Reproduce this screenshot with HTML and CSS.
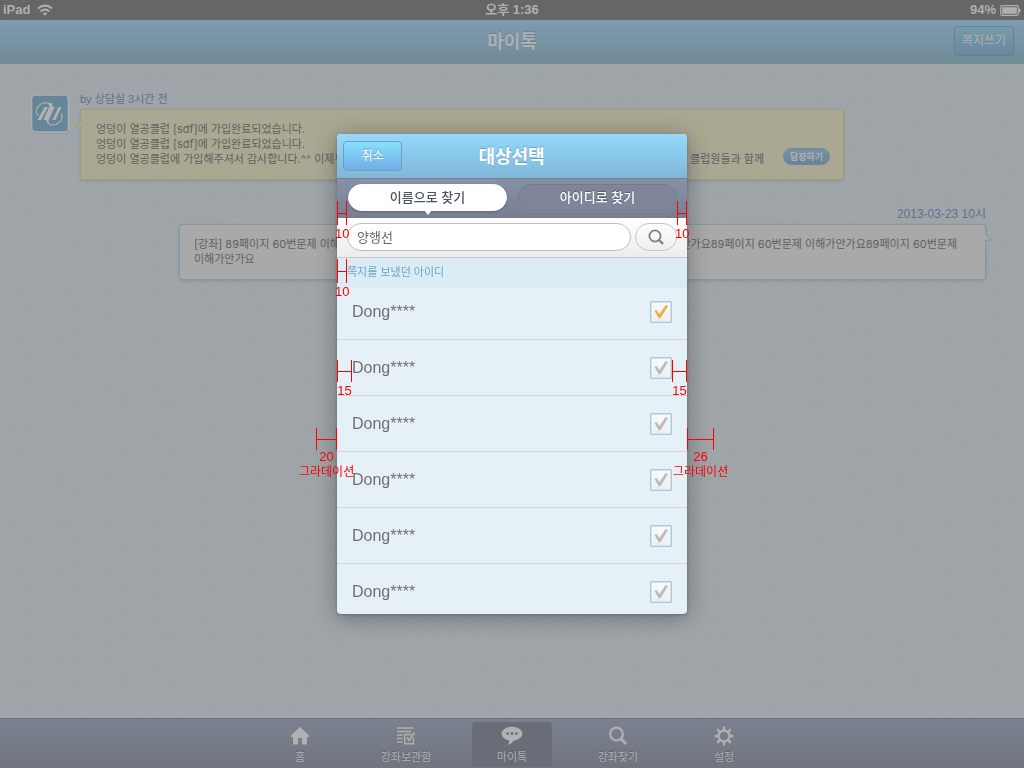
FILE: index.html
```html
<!DOCTYPE html>
<html lang="ko">
<head>
<meta charset="utf-8">
<meta name="viewport" content="width=device-width, initial-scale=1">
<title>마이톡</title>
<link rel="stylesheet" href="styles.css">
</head>
<body>
<div class="app">
  <div class="status">
    <span class="status-side">iPad
      <svg class="wifi" viewBox="0 0 16 12" width="16" height="12"><g fill="none" stroke="#b0b0b0" stroke-width="2"><path d="M1 4.6Q8-1.6 15 4.6"/><path d="M3.6 7.4Q8 3.5 12.4 7.4"/></g><path d="M5.8 9.4Q8 7.6 10.2 9.4L8 11.8Z" fill="#b0b0b0"/></svg>
    </span>
    <span>오후 1:36</span>
    <span class="status-side status-end">94%
      <svg viewBox="0 0 21 11" width="21" height="11"><rect x=".7" y=".7" width="17.6" height="9.6" rx="1.6" fill="none" stroke="#b0b0b0" stroke-width="1.2"/><rect x="2.2" y="2.2" width="14.6" height="6.6" fill="#b0b0b0"/><path d="M19 3.2q1.6.6 1.6 2.3T19 7.8Z" fill="#b0b0b0"/></svg>
    </span>
  </div>
  <header class="navbar">
    <h1 class="nav-title">마이톡</h1>
    <button class="write" type="button">쪽지쓰기</button>
  </header>
  <main class="feed">
    <article class="post">
      <svg class="avatar" viewBox="0 0 40 40" width="40" height="40"><rect x="1" y="1.5" width="38" height="38" rx="4" fill="#8e979c"/><rect x="1.5" y="1" width="37" height="37" rx="4" fill="#658599" stroke="#b0adb0" stroke-width="1.6"/><g fill="#b3b0b3"><path d="M14.500 13H18L11 26H7.500Z"/><path d="M21.500 13H24.800L19 25Q17.500 29 21 30.500Q15.500 30 16.500 25Z"/><path d="M28.500 13H31.500L25.500 26H22.300Z"/><path d="M16.500 9Q23.500 7.500 22.500 13L16.500 26H13.500L19 13.500Q20 10 16.500 9Z"/></g><g fill="none" stroke="#b3b0b3" stroke-linecap="round"><path d="M8 21.500C4 17 8 8.500 17 8.800" stroke-width="1.100"/><path d="M20 30.600C27 32.500 34 26.500 31.500 19.500" stroke-width="1.200"/></g></svg>
      <div class="post-body">
        <p class="meta">by 상담실 3시간 전</p>
        <div class="bubble bubble-note">
          <svg class="tail tail-left" viewBox="0 0 8 9" width="8" height="9"><path d="M8 0L1 5.500L8 6.500" fill="#aaa893" stroke="#a39c78"/></svg>
          <div class="lines">
            <p>엉덩이 열공클럽 [sdf]에 가입완료되었습니다.</p>
            <p>엉덩이 열공클럽 [sdf]에 가입완료되었습니다.</p>
            <p class="split"><span>엉덩이 열공클럽에 가입해주셔서 감사합니다.^^ 이제부터</span><span>클럽원들과 함께</span></p>
          </div>
          <button class="reply" type="button">답장하기</button>
        </div>
      </div>
    </article>
    <article class="post-own">
      <p class="meta meta-date">2013-03-23 10시</p>
      <div class="bubble bubble-own">
        <div class="lines">
          <p class="split"><span>[강좌] 89페이지 60번문제 이해가안가요</span><span>이해가안가요89페이지 60번문제 이해가안가요89페이지 60번문제</span></p>
          <p>이해가안가요</p>
        </div>
        <svg class="tail tail-right" viewBox="0 0 9 9" width="9" height="9"><path d="M0 1.500L7.500 7L0 7" fill="#a9a9a9" stroke="#7e98a6"/></svg>
      </div>
    </article>
  </main>
  <nav class="tabbar">
    <a class="tab" href="#home"><svg viewBox="0 0 20 20" width="20" height="20"><path d="M10 .8L.8 9.700V11H3V18.500H8V12H12V18.500H17V11H19.200V9.700Z" fill="#b1b0b3"/></svg>홈</a>
    <a class="tab" href="#locker"><svg viewBox="0 0 20 20" width="20" height="20"><g fill="none" stroke="#b1b0ac" stroke-width="1.500"><path d="M1 2H17.500M1 5.500H15M1 9H6.500M1 12.500H6.500M1 16H6.500"/><path d="M15.500 8.500H8.700V17.800H17.500V11.500"/><path d="M11 11.500L13.200 14.500L18.500 6.500" stroke-width="1.800"/></g></svg>강좌보관함</a>
    <a class="tab tab-on" href="#talk"><svg viewBox="0 0 22 20" width="22" height="20"><path d="M11 .8C17 .8 21.300 3.700 21.300 7.700C21.300 11.300 17.500 14 13 14.400Q11 17.500 7 19Q8.500 16.500 8 14.200C3.700 13.500.7 11.200.7 7.700C.7 3.700 5 .8 11 .8Z" fill="#b3b1b4"/><g fill="#666b77"><circle cx="6.500" cy="7.600" r="1.400"/><circle cx="11" cy="7.600" r="1.400"/><circle cx="15.500" cy="7.600" r="1.400"/></g></svg>마이톡</a>
    <a class="tab" href="#search"><svg viewBox="0 0 20 20" width="20" height="20"><circle cx="8.500" cy="8" r="6.300" fill="none" stroke="#b1b0b3" stroke-width="2.200"/><path d="M13 12.800L18 18" stroke="#b1b0b3" stroke-width="2.800"/></svg>강좌찾기</a>
    <a class="tab" href="#settings"><svg viewBox="0 0 20 20" width="20" height="20"><circle cx="10" cy="10" r="5.400" fill="none" stroke="#b1b0ac" stroke-width="2.200"/><path d="M10 .4V4M10 16V19.600M.4 10H4M16 10H19.600M3.200 3.200L5.800 5.800M14.200 14.200L16.800 16.800M16.800 3.200L14.200 5.800M5.800 14.200L3.200 16.800" stroke="#b1b0ac" stroke-width="2.400"/></svg>설정</a>
  </nav>
</div>

<div class="overlay">
  <div class="stage">
    <section class="dialog" role="dialog" aria-labelledby="dialog-title">
      <header class="dialog-head">
        <button class="cancel" type="button">취소</button>
        <h2 class="dialog-title" id="dialog-title">대상선택</h2>
      </header>
      <div class="modes">
        <button class="mode mode-on" type="button">이름으로 찾기</button>
        <button class="mode" type="button">아이디로 찾기</button>
      </div>
      <form class="search">
        <input class="query" type="text" aria-label="이름" value="양행선">
        <button class="go" type="button" aria-label="찾기"><svg viewBox="0 0 16 16" width="16" height="16"><circle cx="7" cy="7" r="5.600" fill="none" stroke="#7b8194" stroke-width="1.800"/><path d="M11 11L15 15" stroke="#7b8194" stroke-width="2.400"/></svg></button>
      </form>
      <h3 class="group">쪽지를 보냈던 아이디</h3>
      <div class="list">
        <label class="row row-first">Dong****<input class="check" type="checkbox" checked></label>
        <label class="row">Dong****<input class="check" type="checkbox"></label>
        <label class="row">Dong****<input class="check" type="checkbox"></label>
        <label class="row">Dong****<input class="check" type="checkbox"></label>
        <label class="row">Dong****<input class="check" type="checkbox"></label>
        <label class="row">Dong****<input class="check" type="checkbox"></label>
      </div>
    </section>
    <div class="mark mark-a"><i class="gauge"></i>10</div>
    <div class="mark mark-b"><i class="gauge"></i>10</div>
    <div class="mark mark-c"><i class="gauge"></i>10</div>
    <div class="mark mark-d"><i class="gauge gauge-15"></i>15</div>
    <div class="mark mark-e"><i class="gauge gauge-15"></i>15</div>
    <div class="mark mark-f"><i class="gauge gauge-20"></i>20<span class="mark-note">그라데이션</span></div>
    <div class="mark mark-g"><i class="gauge gauge-26"></i>26<span class="mark-note">그라데이션</span></div>
  </div>
</div>
</body>
</html>
```
FILE: styles.css
```css
* { box-sizing: border-box; }
body, h1, h2, h3, p { margin: 0; }
body, button, input {
  font-family: "Liberation Sans", "Noto Sans CJK KR", sans-serif;
}
svg { display: block; }
button { cursor: pointer; padding: 0; }

.app {
  min-height: 100vh;
  display: flex;
  flex-direction: column;
  background-color: #9fa5a8;
  background-image:
    repeating-linear-gradient(45deg, rgba(255, 255, 255, 0.01) 0 2px, transparent 2px 4px),
    repeating-linear-gradient(-45deg, rgba(0, 0, 0, 0.01) 0 2px, transparent 2px 4px);
}

.status {
  height: 20px;
  padding: 0 3px;
  display: flex;
  align-items: center;
  background: #666;
  color: #b0b0b0;
  font-size: 13px;
  font-weight: bold;
  line-height: 20px;
}
.status-side { flex: 1; display: flex; align-items: center; gap: 7px; }
.status-end { justify-content: flex-end; gap: 4px; }

.navbar {
  height: 44px;
  padding: 0 10px 2px;
  display: flex;
  align-items: center;
  border-radius: 3px 3px 0 0;
  background: linear-gradient(#7c9cb1, #718b96);
}
.nav-title {
  flex: 1;
  padding: 2px 0 0 60px;
  text-align: center;
  color: #b1aeb1;
  font-size: 18px;
  line-height: 26px;
  text-shadow: 0 -1px 1px #66808e;
}
.write {
  width: 60px;
  height: 30px;
  border: 1px solid #687f92;
  border-radius: 4px;
  background: linear-gradient(#779ba6, #6a87a2);
  color: #b1aeb1;
  font-size: 12px;
  line-height: 20px;
}

.feed {
  flex: 1;
  padding: 28px 38px 28px 30px;
  color: #5f5f5f;
  font-size: 11px;
  line-height: 15px;
}
.post { display: flex; gap: 10px; padding-right: 142px; }
.avatar { flex: none; margin-top: 2px; }
.post-body { flex: 1; }
.meta { color: #607092; line-height: 14px; margin-bottom: 3px; }
.meta-date { font-size: 12px; text-align: right; }
.bubble {
  position: relative;
  display: flex;
  border: 1px solid;
  border-radius: 3px;
  box-shadow: 0 1px 3px rgba(60, 70, 80, 0.2);
}
.bubble-note {
  padding: 12px 13px 12px 15px;
  gap: 19px;
  align-items: flex-end;
  background: #aaa893;
  border-color: #a39c78;
}
.bubble-own {
  padding: 12px 28px 12px 14px;
  background: #a9a9a9;
  border-color: #7e98a6;
}
.lines {
  flex: 1;
  font-family: Inter, "Noto Sans CJK KR", sans-serif;
}
.split { display: flex; justify-content: space-between; white-space: nowrap; }
.post-own { margin: 27px 0 0 149px; }
.reply {
  width: 47px;
  height: 17px;
  margin-bottom: 2px;
  border: 1px solid #6d8799;
  border-radius: 9px;
  background: linear-gradient(#7691a5, #67839f);
  color: #b1b1b1;
  font-size: 9px;
  font-weight: bold;
  line-height: 14px;
}
.tail { position: absolute; }
.tail-left { right: 100%; top: 11px; margin-right: -1px; }
.tail-right { left: 100%; top: 8px; }

.tabbar {
  height: 50px;
  padding-top: 3px;
  display: flex;
  justify-content: center;
  gap: 26px;
  border-top: 1px solid #6b7079;
  background: linear-gradient(#7b818f, #717580);
}
.tab {
  width: 80px;
  height: 45px;
  padding-top: 4px;
  display: flex;
  flex-direction: column;
  align-items: center;
  gap: 3px;
  border-radius: 4px;
  color: #b1b0b3;
  font-size: 11px;
  line-height: 16px;
  text-decoration: none;
  text-shadow: 0 -1px 1px #5e626c;
}
.tab-on { background: #696d77; }

.overlay {
  position: fixed;
  inset: 0;
  padding-top: 134px;
  display: flex;
  justify-content: center;
  align-items: flex-start;
}
.stage { position: relative; width: 350px; }
.dialog {
  height: 480px;
  overflow: hidden;
  border-radius: 4px;
  background: #e5f1f6;
  box-shadow: 0 3px 22px rgba(40, 45, 50, 0.45), 0 1px 3px rgba(40, 45, 50, 0.3);
}
.dialog-head {
  height: 44px;
  padding: 0 6px;
  display: flex;
  align-items: center;
  background: linear-gradient(#92d9fc, #80b7d7);
}
.dialog-title {
  flex: 1;
  padding: 2px 60px 0 0;
  text-align: center;
  color: #fff;
  font-size: 18px;
  line-height: 26px;
  text-shadow: 0 -1px 1px #679fc0;
}
.cancel {
  width: 59px;
  height: 30px;
  border: 1px solid #739dbb;
  border-radius: 4px;
  background: linear-gradient(#8adffb, #6fafe6);
  color: #fff;
  font-size: 12px;
  line-height: 20px;
  text-shadow: 0 -1px 1px #5b96bd;
}
.modes {
  height: 40px;
  padding: 5px 10px 7px 11px;
  display: flex;
  gap: 11px;
  border-top: 1px solid #727f94;
  background: linear-gradient(#8791a7, #777e90);
}
.mode {
  position: relative;
  flex: 1;
  border: 1px solid #757b8e;
  border-radius: 14px;
  background: #7f8699;
  color: #fff;
  font-size: 13px;
  font-weight: 500;
  line-height: 20px;
  text-shadow: 0 -1px 1px #555b6c;
  box-shadow: 0 1px 0 #858c9e;
}
.mode-on {
  background: #fff;
  border-color: #fff;
  color: #4c5365;
  text-shadow: none;
  box-shadow: 0 1px 2px #5f6677;
}
.mode-on::after {
  content: "";
  position: absolute;
  top: 100%;
  left: 50%;
  margin-left: -4px;
  border: 4px solid transparent;
  border-top: 5px solid #fff;
}
.search {
  height: 40px;
  padding: 5px 10px 6px;
  display: flex;
  gap: 4px;
  border-bottom: 1px solid #c6c9cc;
  background: linear-gradient(#fff, #ececec);
}
.query {
  flex: 1;
  min-width: 0;
  padding: 0 9px 2px;
  border: 1px solid #bdbdbd;
  border-radius: 15px;
  background: #fff;
  color: #666;
  font-size: 13px;
}
.go {
  width: 42px;
  display: flex;
  align-items: center;
  justify-content: center;
  border: 1px solid #c4c4c4;
  border-radius: 15px;
  background: linear-gradient(#fff, #eee);
}
.group {
  height: 30px;
  padding-left: 10px;
  background: #dbecf5;
  border-bottom: 1px solid #d8e8ef;
  color: #69a5c6;
  font-size: 11px;
  font-weight: normal;
  line-height: 29px;
}
.row {
  height: 56px;
  padding: 0 15px;
  display: flex;
  align-items: center;
  justify-content: space-between;
  border-bottom: 1px solid #cfd5d9;
  color: #707070;
  font-size: 16px;
}
.row-first { height: 52px; padding-bottom: 4px; }
.check {
  appearance: none;
  width: 22px;
  height: 22px;
  margin: 0;
  border: 1px solid #a9c9df;
  border-radius: 1px;
  background: linear-gradient(#f8fbfc, #ecf0f2);
  box-shadow: inset 0 0 0 1px #d4e3ed;
  color: #b9bbbd;
}
.check:checked { color: #efac45; }
.check::after {
  content: "";
  display: block;
  width: 14px;
  height: 14px;
  margin: 3px;
  background: currentColor;
  clip-path: polygon(4% 46%, 16% 38%, 39% 68%, 84% 4%, 100% 10%, 46% 98%, 34% 98%);
}

.mark {
  position: absolute;
  display: flex;
  flex-direction: column;
  align-items: center;
  color: #f00;
  font-size: 13px;
  line-height: 14px;
}
.gauge {
  width: 10px;
  height: 24px;
  margin-bottom: 2px;
  border: solid #f00;
  border-width: 0 1px;
  background: linear-gradient(#f00, #f00) 0 50% / 100% 1px no-repeat;
}
.gauge-15 { width: 15px; height: 22px; }
.gauge-20 { width: 21px; height: 22px; margin-bottom: 0; }
.gauge-26 { width: 27px; height: 22px; margin-bottom: 0; }
.mark-note { font-size: 12px; line-height: 16px; white-space: nowrap; }
.mark-a { left: -2px; top: 67px; }
.mark-b { left: 338px; top: 67px; }
.mark-c { left: -2px; top: 125px; }
.mark-d { left: 0; top: 226px; }
.mark-e { left: 335px; top: 226px; }
.mark-f { left: -38px; top: 294px; }
.mark-g { left: 336px; top: 294px; }
```
